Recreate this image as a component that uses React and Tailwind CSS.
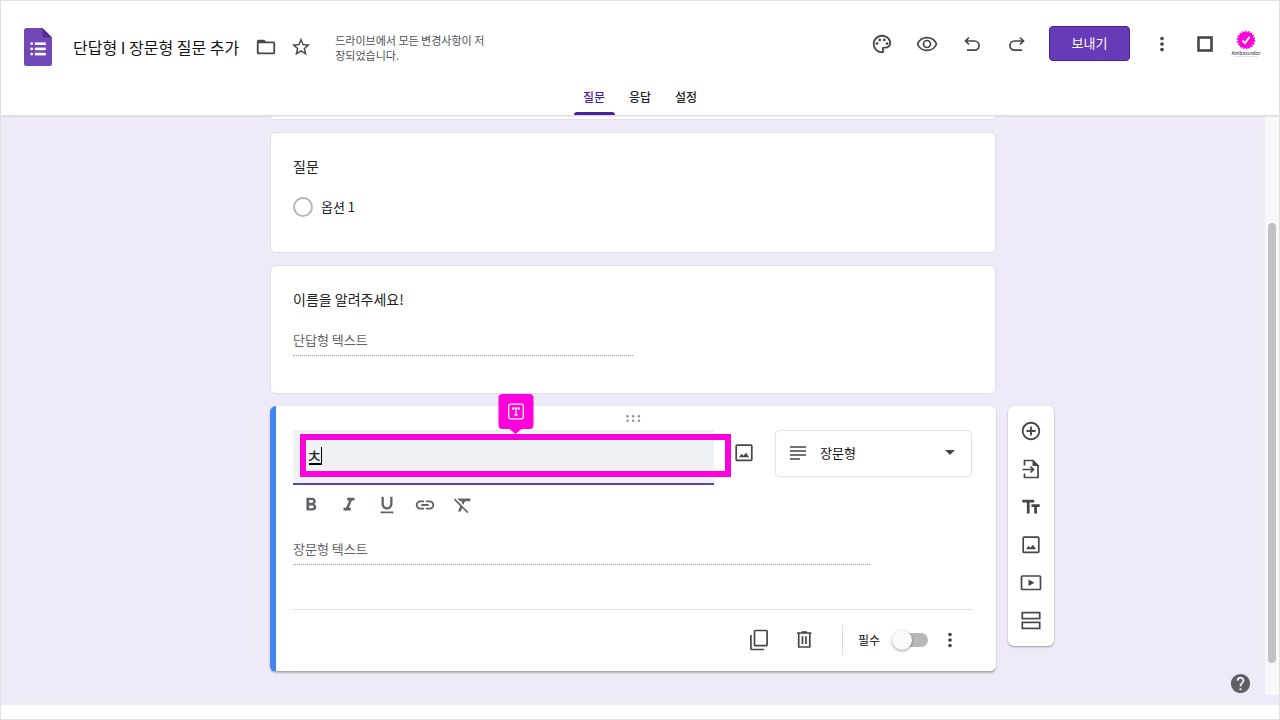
import React, { useState } from "react";
import {
	MdAddCircleOutline,
	MdFolderOpen,
	MdFormatBold,
	MdFormatClear,
	MdFormatItalic,
	MdFormatUnderlined,
	MdHelp,
	MdLink,
	MdMoreVert,
	MdOutlinePalette,
	MdStarBorder,
	MdTextFields,
} from "react-icons/md";

const Icon = ({ children }) => (
	<svg
		width="22"
		height="22"
		viewBox="0 0 22 22"
		fill="none"
		stroke="currentColor"
		strokeWidth="1.7"
		aria-hidden="true"
	>
		{children}
	</svg>
);

const EyeIcon = () => (
	<Icon>
		<path d="M1.5 11C3.2 7 6.8 4.6 11 4.6S18.8 7 20.5 11C18.8 15 15.2 17.4 11 17.4S3.2 15 1.5 11Z" />
		<circle cx="11" cy="11" r="3.5" />
	</Icon>
);

const UndoIcon = () => (
	<Icon>
		<path d="M8 4.5 4.5 8 8 11.500M4.5 8H13.5a4.6 4.6 0 0 1 0 9.2H6" />
	</Icon>
);

const RedoIcon = () => (
	<Icon>
		<path d="M14 4.5 17.5 8 14 11.500M17.5 8H8.5a4.6 4.6 0 0 0 0 9.2H16" />
	</Icon>
);

const SquareIcon = () => (
	<Icon>
		<rect x="4.5" y="4.5" width="13" height="13" strokeWidth="2.6" />
	</Icon>
);

const ImageIcon = () => (
	<Icon>
		<rect x="3.2" y="3.2" width="15.6" height="15.2" rx="1" />
		<path
			d="M6 15.2 8.6 11.8 10.4 13.8 13 10.8 16.2 15.2Z"
			fill="currentColor"
			stroke="none"
		/>
	</Icon>
);

const ImportIcon = () => (
	<Icon>
		<path d="M4.5 7.5V2.500H13L18 7.500V19.500H4.500V15.500M2.500 11.500H13M10.500 8.500 13.500 11.500 10.500 14.500" />
		<path d="M12.5 2V8H18.5Z" fill="currentColor" stroke="none" />
	</Icon>
);

const VideoIcon = () => (
	<Icon>
		<rect x="1.5" y="4" width="19" height="13.5" rx="1" />
		<path d="M8.5 7.5V14L14.5 10.75Z" fill="currentColor" stroke="none" />
	</Icon>
);

const SectionIcon = () => (
	<Icon>
		<rect x="2.3" y="2.6" width="17.4" height="6" />
		<rect x="2.3" y="12.4" width="17.4" height="6" />
	</Icon>
);

const CopyIcon = () => (
	<Icon>
		<rect x="6.5" y="1.5" width="12.6" height="15.2" rx="1" />
		<path d="M2.9 6V19.500a1 1 0 0 0 1 1H16" />
	</Icon>
);

const TrashIcon = () => (
	<Icon>
		<path d="M4 4H18.500M8.500 3.2H14M5.700 4V18H16.800V4M9.500 7.2V15M13 7.2V15" />
	</Icon>
);

const ShortLongIcon = () => (
	<Icon>
		<path d="M3 5H19M3 9H19M3 13H19M3 17H13" />
	</Icon>
);

const FormsLogo = () => (
	<svg width="28" height="38" viewBox="0 0 28 38" aria-hidden="true">
		<path
			d="M2.5 0H18.5L28 9.5V35.5A2.5 2.5 0 0 1 25.5 38H2.5A2.5 2.5 0 0 1 0 35.5V2.5A2.5 2.5 0 0 1 2.5 0Z"
			fill="#7248b9"
		/>
		<path d="M18.5 0 28 9.5H20.5A2 2 0 0 1 18.5 7.5Z" fill="#4f2e8c" />
		<g fill="#fff">
			<circle cx="7.7" cy="15.7" r="1.4" />
			<circle cx="7.7" cy="20.9" r="1.4" />
			<circle cx="7.7" cy="26.1" r="1.4" />
			<rect x="10.8" y="14.4" width="11" height="2.6" />
			<rect x="10.8" y="19.6" width="11" height="2.6" />
			<rect x="10.8" y="24.8" width="11" height="2.6" />
		</g>
	</svg>
);

const Avatar = () => (
	<button aria-label="계정" className="flex w-7 flex-col items-center">
		<svg width="20" height="20" viewBox="0 0 20 20" aria-hidden="true">
			<circle cx="10" cy="10" r="8" fill="#ff00dc" />
			<circle
				cx="10"
				cy="10"
				r="8.3"
				fill="none"
				stroke="#ff00dc"
				strokeWidth="1.8"
				strokeDasharray="1.8 1.1"
			/>
			<path d="M6.3 10.5 9 13 13.6 6.8" fill="none" stroke="#fff" strokeWidth="2" />
		</svg>
		<span className="text-[5px] leading-[5px] text-gray-800">Ambassador</span>
		<svg width="22" height="3" viewBox="0 0 22 3" aria-hidden="true">
			<path d="M0 1.5H22" stroke="#d4d4d4" strokeDasharray="2 1" />
		</svg>
	</button>
);

const tabs = ["질문", "응답", "설정"];

const formatButtons = [
	{ label: "굵게", icon: <MdFormatBold size={22} /> },
	{ label: "기울임꼴", icon: <MdFormatItalic size={22} /> },
	{ label: "밑줄", icon: <MdFormatUnderlined size={22} /> },
	{ label: "링크 삽입", icon: <MdLink size={22} /> },
	{ label: "서식 지우기", icon: <MdFormatClear size={22} /> },
];

const sideButtons = [
	{ label: "질문 추가", icon: <MdAddCircleOutline size={22} /> },
	{ label: "질문 가져오기", icon: <ImportIcon /> },
	{ label: "제목 및 설명 추가", icon: <MdTextFields size={22} /> },
	{ label: "이미지 추가", icon: <ImageIcon /> },
	{ label: "동영상 추가", icon: <VideoIcon /> },
	{ label: "섹션 추가", icon: <SectionIcon /> },
];

const Header = () => {
	const [activeTab, setActiveTab] = useState("질문");

	return (
		<header className="relative z-10 border-b border-[#dcdce0] bg-white pt-[25px] shadow-[0_1px_1px_rgba(0,0,0,0.06)]">
			<div className="flex items-start justify-between pr-[19px] pl-[23px]">
				<div className="flex h-[42px] items-center">
					<FormsLogo />
					<h1 className="ml-[21px] text-base leading-5 text-[#111]">
						단답형 I 장문형 질문 추가
					</h1>
					<button aria-label="폴더로 이동" className="ml-4">
						<MdFolderOpen size={22} />
					</button>
					<button aria-label="별표" className="ml-[13px]">
						<MdStarBorder size={22} />
					</button>
					<p className="ml-[23px] w-[156px] pt-[2px] text-[11px] leading-[15px] break-all text-[#4d5156]">
						드라이브에서 모든 변경사항이 저장되었습니다.
					</p>
				</div>

				<div className="flex h-[35px] items-center gap-[21px]">
					<div className="flex items-center gap-[23px]">
						<button aria-label="테마 맞춤설정">
							<MdOutlinePalette size={22} />
						</button>
						<button aria-label="미리보기">
							<EyeIcon />
						</button>
						<button aria-label="실행취소">
							<UndoIcon />
						</button>
						<button aria-label="다시 실행">
							<RedoIcon />
						</button>
					</div>
					<button className="h-[35px] w-[81px] rounded border border-[#4c1d9f] bg-[#673ab7] pb-[2px] text-[13px] leading-5 text-white">
						보내기
					</button>
					<button aria-label="더보기">
						<MdMoreVert size={22} />
					</button>
					<div className="flex items-center gap-4">
						<button aria-label="Google 앱">
							<SquareIcon />
						</button>
						<Avatar />
					</div>
				</div>
			</div>

			<nav className="mt-3 flex justify-center gap-[5px]">
				{tabs.map((tab) => (
					<button
						key={tab}
						onClick={() => setActiveTab(tab)}
						className={`flex h-[35px] w-[41px] flex-col items-center justify-between pt-[7px] text-xs leading-5 font-medium ${
							tab === activeTab ? "text-[#4c1d9f]" : "text-[#202124]"
						}`}
					>
						{tab}
						{tab === activeTab && (
							<span className="h-[3px] w-full rounded-t bg-[#4c1d9f]" />
						)}
					</button>
				))}
			</nav>
		</header>
	);
};

const Card = ({ children }) => (
	<section className="rounded-md border border-[#e0dfe6] bg-white px-[22px] pt-[23px] pb-[35px]">
		{children}
	</section>
);

const ActiveCard = () => {
	const [title, setTitle] = useState("ㅊ");

	return (
		<section className="rounded-md border-b border-l-6 border-b-[#a9a9b3] border-l-[#4285f4] bg-white pr-6 pl-[17px] shadow-[0_1px_2px_rgba(0,0,0,0.25)]">
			{/* 드래그 핸들 */}
			<div className="flex h-6 items-center justify-center">
				<svg width="16" height="8" viewBox="0 0 16 8" fill="#8a8d91" aria-hidden="true">
					<circle cx="2.5" cy="2.2" r="1.2" />
					<circle cx="8.2" cy="2.2" r="1.2" />
					<circle cx="13.9" cy="2.2" r="1.2" />
					<circle cx="2.5" cy="6.8" r="1.2" />
					<circle cx="8.2" cy="6.8" r="1.2" />
					<circle cx="13.9" cy="6.8" r="1.2" />
				</svg>
			</div>

			<div className="flex items-start">
				<div className="relative min-w-0 flex-1">
					<input
						type="text"
						aria-label="질문 제목"
						value={title}
						onChange={(e) => setTitle(e.target.value)}
						className="block h-[55px] w-full border-b-2 border-[#673ab7] bg-[#eef2f4] px-[13px] pb-[3px] text-lg text-[#202124] outline-none"
					/>
					{/* 입력 위치를 강조하는 테두리와 말풍선 */}
					<div className="pointer-events-none absolute top-1 -right-[17px] left-[7px] h-[43px] border-6 border-[#ff00dc] ring-1 ring-white inset-ring-1 inset-ring-white">
						{/* 조합 중인 글자의 밑줄과 커서 */}
						<span className="absolute top-[7px] left-[3px] h-[18px] w-[13px] border-r border-b-2 border-black" />
						<div className="absolute -top-[46px] left-1/2 flex h-[35px] w-[35px] -translate-x-1/2 items-center justify-center rounded bg-[#ff00dc]">
							<svg
								width="17"
								height="17"
								viewBox="0 0 17 17"
								fill="none"
								stroke="#fff"
								strokeWidth="1.3"
								aria-hidden="true"
							>
								<rect x="1.2" y="1.2" width="14.6" height="14.6" rx="2" />
								<path d="M5.3 7V5.200H11.700V7M8.500 5.200V12M7 12H10" />
							</svg>
							<svg
								className="absolute top-full"
								width="12"
								height="5"
								viewBox="0 0 12 5"
								aria-hidden="true"
							>
								<path d="M0 0H12L6 5Z" fill="#ff00dc" />
							</svg>
						</div>
					</div>
				</div>
				<button aria-label="이미지 추가" className="ml-[19px] h-[45px]">
					<ImageIcon />
				</button>
				<div className="relative ml-5 w-[197px]">
					<select
						aria-label="질문 유형"
						defaultValue="장문형"
						className="h-[47px] w-full appearance-none rounded border border-[#dfe1e5] bg-white pr-8 pb-[2px] pl-11 text-[13px] text-[#111] outline-none"
					>
						<option>단답형</option>
						<option>장문형</option>
					</select>
					<span className="pointer-events-none absolute inset-0 flex items-center justify-between pr-[17px] pb-[2px] pl-3">
						<ShortLongIcon />
						<svg width="10" height="5" viewBox="0 0 10 5" fill="currentColor" aria-hidden="true">
							<path d="M0 0H10L5 5Z" />
						</svg>
					</span>
				</div>
			</div>

			<div className="mt-[9px] flex gap-4 pl-[7px] text-[#5f6368]">
				{formatButtons.map((button) => (
					<button key={button.label} aria-label={button.label}>
						{button.icon}
					</button>
				))}
			</div>

			<p className="mt-[23px] w-[85%] border-b border-dotted border-[#9a9a9a] pb-[5px] text-[13px] leading-5 text-[#5f6368]">
				장문형 텍스트
			</p>

			<div className="mt-11 flex h-[62px] items-center justify-end border-t border-[#dfdfdf] pr-[11px] pb-[2px]">
				<button aria-label="복사">
					<CopyIcon />
				</button>
				<button aria-label="삭제" className="ml-[23px]">
					<TrashIcon />
				</button>
				<span className="ml-[27px] h-[30px] w-px bg-[#dadce0]" />
				<label htmlFor="required" className="ml-[15px] text-xs leading-5 text-[#111]">
					필수
				</label>
				<input
					id="required"
					type="checkbox"
					className="relative ml-3 h-5 w-9 appearance-none before:absolute before:top-[3px] before:right-0 before:h-[14px] before:w-8 before:rounded-full before:bg-[#b8b8b8] after:absolute after:top-0 after:left-0 after:h-5 after:w-5 after:rounded-full after:bg-[#fafafa] after:shadow-[0_1px_3px_rgba(0,0,0,0.4)] checked:after:left-4"
				/>
				<button aria-label="옵션 더보기" className="ml-[11px]">
					<MdMoreVert size={22} />
				</button>
			</div>
		</section>
	);
};

const App = () => {
	return (
		<div className="flex min-h-screen flex-col border border-[#e1e1e1] bg-white font-['Noto_Sans_CJK_KR','Noto_Sans',sans-serif] text-[#444746]">
			<Header />

			<div className="relative flex flex-1 bg-[#eeeaf8]">
				<main className="grid min-w-0 flex-1 grid-cols-[1fr_minmax(0,726px)_1fr] content-start gap-y-3 pb-8">
					<div className="col-start-2 h-1 rounded-b-md border border-t-0 border-[#e0dfe6] bg-white" />

					<div className="col-start-2">
						<Card>
							<h2 className="text-sm leading-5 text-[#202124]">질문</h2>
							<label className="mt-[21px] flex h-5 items-center gap-2 text-[13px] leading-5 text-[#202124]">
								<input
									type="radio"
									className="h-5 w-5 appearance-none rounded-full border-2 border-[#b5b5b5]"
								/>
								옵션 1
							</label>
						</Card>
					</div>

					<div className="col-start-2">
						<Card>
							<h2 className="text-sm leading-5 text-[#202124]">이름을 알려주세요!</h2>
							<p className="mt-[21px] mb-0.5 w-1/2 border-b border-dotted border-[#9a9a9a] pb-[5px] text-[13px] leading-5 text-[#5f6368]">
								단답형 텍스트
							</p>
						</Card>
					</div>

					<div className="col-start-2">
						<ActiveCard />
					</div>

					{/* 오른쪽 도구 모음 */}
					<aside className="col-start-3 ml-3 flex w-[46px] flex-col items-center gap-4 self-start rounded-md bg-white py-[14px] shadow-[0_1px_2px_rgba(0,0,0,0.35)]">
						{sideButtons.map((button) => (
							<button key={button.label} aria-label={button.label}>
								{button.icon}
							</button>
						))}
					</aside>
				</main>

				{/* 스크롤바 */}
				<div className="mb-[10px] flex w-[14px] justify-center bg-[#f8f8f8] pt-[107px] pb-8">
					<div className="w-2 rounded-full bg-[#c1c1c1]" />
				</div>

				<button aria-label="도움말" className="absolute right-[27px] bottom-[10px] text-[#5f6064]">
					<MdHelp size={23} />
				</button>
			</div>

			<footer className="h-[14px] bg-white" />
		</div>
	);
};

export default App;
